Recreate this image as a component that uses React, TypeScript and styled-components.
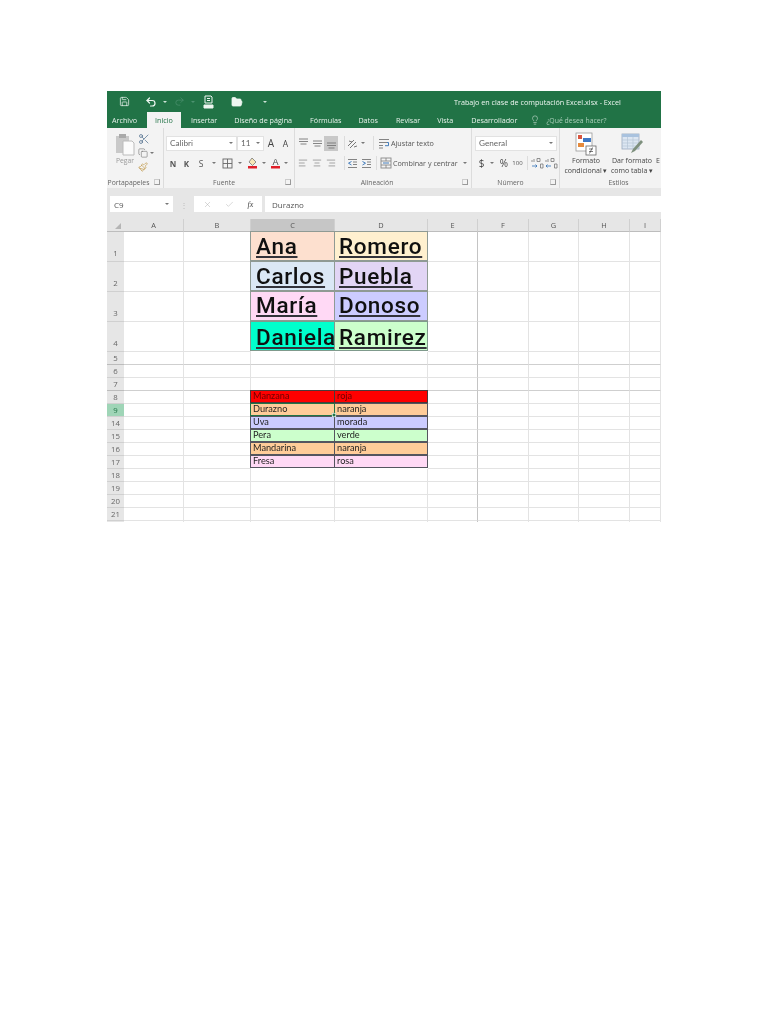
import React, { FC, ReactNode } from "react";
import styled, { createGlobalStyle } from "styled-components";
import {
  AlignCenter,
  AlignLeft,
  AlignRight,
  Check,
  Copy,
  FolderOpen,
  Lightbulb,
  Paintbrush,
  Redo2,
  Save,
  Scissors,
  Undo2,
  X
} from "lucide-react";

const GlobalStyle = createGlobalStyle`
  html, body { margin: 0; padding: 0; background: #fff; }
  body { font-family: "Open Sans", "Liberation Sans", sans-serif; }
`;

const Page = styled.div`
  width: 768px;
  height: 1024px;
  padding: 91px 0 0 107px;
  box-sizing: border-box;
  overflow: hidden;
`;

const Excel = styled.div`
  width: 554px;
  height: 431px;
  overflow: hidden;
  filter: blur(0.5px);
`;

/* title bar */

const TitleBar = styled.div`
  height: 21px;
  background: #217346;
  color: #eef6f1;
  display: flex;
  align-items: center;
  font-size: 7.2px;
`;

const QuickButton = styled.span<{ $width: number }>`
  width: ${(p) => p.$width}px;
  display: flex;
  align-items: center;
  justify-content: center;
  flex-shrink: 0;
`;

const DocTitle = styled.span`
  margin-left: 179px;
  white-space: nowrap;
`;

const TabBar = styled.div`
  height: 16px;
  background: #217346;
  display: flex;
  align-items: stretch;
  padding-left: 5px;
`;

const Tab = styled.div<{ $active?: boolean; $gap: number }>`
  margin-left: ${(p) => p.$gap}px;
  padding: ${(p) => (p.$active ? "0 8px" : "0")};
  display: flex;
  align-items: center;
  gap: 6px;
  font-size: 7.2px;
  white-space: nowrap;
  color: ${(p) => (p.$active ? "#217346" : "#e6f1ea")};
  background: ${(p) => (p.$active ? "#f3f3f3" : "transparent")};
`;

const TabHint = styled.span`
  color: #a9cdb8;
  font-size: 6.9px;
`;

/* ribbon */

const Ribbon = styled.div`
  height: 60px;
  background: #f3f3f3;
  display: flex;
`;

const Group = styled.div<{ $width: number }>`
  width: ${(p) => p.$width}px;
  flex-shrink: 0;
  box-sizing: border-box;
  border-right: 1px solid #dcdcdc;
  display: flex;
  flex-direction: column;
  &:last-child { border-right: 0; }
`;

const GroupBody = styled.div`
  flex: 1;
  min-height: 0;
  display: flex;
  flex-direction: column;
`;

const ToolRow = styled.div<{ $top: number; $left: number }>`
  display: flex;
  align-items: center;
  height: 16px;
  margin-top: ${(p) => p.$top}px;
  margin-left: ${(p) => p.$left}px;
  color: #555;
  font-size: 7.2px;
  white-space: nowrap;
`;

const GroupLabel = styled.div<{ $padLeft?: number; $padRight?: number }>`
  height: 12px;
  flex-shrink: 0;
  box-sizing: border-box;
  padding: 0 ${(p) => p.$padRight ?? 0}px 0 ${(p) => p.$padLeft ?? 0}px;
  display: flex;
  align-items: center;
  justify-content: center;
  position: relative;
  font-size: 6.8px;
  color: #666;
  white-space: nowrap;
`;

const Launcher = styled.span`
  position: absolute;
  right: 3px;
  top: 3px;
  width: 4px;
  height: 4px;
  border: 1px solid #999;
  border-top-color: #ccc;
  border-left-color: #ccc;
`;

const Tool = styled.span<{ $width: number; $on?: boolean; $weight?: number; $color?: string; $size?: number }>`
  width: ${(p) => p.$width}px;
  height: 15px;
  flex-shrink: 0;
  display: flex;
  align-items: center;
  justify-content: center;
  font-size: ${(p) => p.$size ?? 7.2}px;
  font-weight: ${(p) => p.$weight ?? 400};
  color: ${(p) => p.$color ?? "#555"};
  background: ${(p) => (p.$on ? "#c8c8c8" : "transparent")};
`;

const Caret = styled.span<{ $width?: number; $color?: string }>`
  width: ${(p) => p.$width ?? 10}px;
  flex-shrink: 0;
  display: flex;
  justify-content: center;
  &::after {
    content: "";
    border-left: 2px solid transparent;
    border-right: 2px solid transparent;
    border-top: 2px solid ${(p) => p.$color ?? "#777"};
  }
`;

const ComboBox = styled.div<{ $width: number }>`
  width: ${(p) => p.$width}px;
  height: 15px;
  box-sizing: border-box;
  padding: 0 2px 0 3px;
  background: #fff;
  border: 1px solid #e2e2e2;
  display: flex;
  align-items: center;
  justify-content: space-between;
  font-family: "Lato", "Open Sans", sans-serif;
  font-size: 8.2px;
  color: #666;
  flex-shrink: 0;
`;

const PasteArea = styled.div`
  display: flex;
  height: 48px;
  padding: 5px 0 0 5px;
  box-sizing: border-box;
`;

const PasteButton = styled.div`
  width: 26px;
  display: flex;
  flex-direction: column;
  align-items: center;
  font-size: 6.8px;
  line-height: 8px;
  color: #999;
`;

const ClipColumn = styled.div`
  display: flex;
  flex-direction: column;
  gap: 3px;
  color: #666;
`;

const ClipTool = styled.span`
  display: flex;
  align-items: center;
  height: 11px;
`;

const BigTool = styled.div<{ $width: number }>`
  width: ${(p) => p.$width}px;
  flex-shrink: 0;
  display: flex;
  flex-direction: column;
  align-items: center;
  font-size: 7px;
  line-height: 10px;
  color: #444;
  white-space: nowrap;
  text-align: center;
  padding-top: 4px;
`;

const StylesRow = styled.div`
  display: flex;
  padding-left: 2px;
  height: 48px;
  overflow: hidden;
`;

const Divider = styled.span<{ $left: number; $right: number }>`
  width: 1px;
  height: 14px;
  background: #dcdcdc;
  margin: 0 ${(p) => p.$right}px 0 ${(p) => p.$left}px;
  flex-shrink: 0;
`;

/* formula bar */

const FormulaBar = styled.div`
  height: 31px;
  box-sizing: border-box;
  padding-top: 8px;
  background: #e6e6e6;
`;

const FormulaInner = styled.div`
  height: 16px;
  display: flex;
  align-items: stretch;
  font-size: 8px;
  color: #555;
`;

const NameBox = styled.div`
  width: 63px;
  margin-left: 3px;
  background: #fff;
  display: flex;
  align-items: center;
  justify-content: space-between;
  padding: 0 3px 0 4px;
  box-sizing: border-box;
`;

const Grip = styled.span`
  width: 21px;
  display: flex;
  align-items: center;
  justify-content: center;
  color: #bbb;
  font-size: 8px;
`;

const FormulaTools = styled.div`
  width: 68px;
  background: #fff;
  display: flex;
  align-items: center;
  justify-content: space-around;
  color: #aaa;
  padding: 0 2px;
  box-sizing: border-box;
`;

const FxLabel = styled.span`
  font-family: "Liberation Serif", serif;
  font-style: italic;
  font-size: 8px;
  color: #444;
`;

const FormulaInput = styled.div`
  flex: 1;
  margin-left: 3px;
  background: #fff;
  padding-left: 7px;
  display: flex;
  align-items: center;
`;

/* sheet */

const Sheet = styled.div`
  display: grid;
  grid-template-columns: 17px 60px 67px 84px 93px 50px 51px 50px 51px 31px;
  background: #fff;
`;

const Corner = styled.div`
  height: 12px;
  background: #e6e6e6;
  border-bottom: 1px solid #bdbdbd;
  position: relative;
  &::after {
    content: "";
    position: absolute;
    right: 3px;
    bottom: 2px;
    border-left: 6px solid transparent;
    border-bottom: 6px solid #b5b5b5;
  }
`;

const ColumnHead = styled.div<{ $selected?: boolean }>`
  height: 12px;
  display: flex;
  align-items: center;
  justify-content: center;
  font-size: 7.4px;
  color: #555;
  background: ${(p) => (p.$selected ? "#c6c6c6" : "#e6e6e6")};
  border-right: 1px solid #d0d0d0;
  border-bottom: 1px solid ${(p) => (p.$selected ? "#217346" : "#bdbdbd")};
`;

const RowHead = styled.div<{ $height: number; $tall?: boolean; $selected?: boolean; $heavy?: boolean }>`
  height: ${(p) => p.$height}px;
  box-sizing: border-box;
  display: flex;
  align-items: flex-end;
  justify-content: center;
  padding-bottom: ${(p) => (p.$tall ? 2 : 0)}px;
  font-size: 7.8px;
  line-height: 12px;
  overflow: hidden;
  color: ${(p) => (p.$selected ? "#217346" : "#666")};
  background: ${(p) => (p.$selected ? "#9fd5b7" : "#e6e6e6")};
  border-bottom: 1px solid ${(p) => (p.$heavy ? "#bcbcbc" : "#d0d0d0")};
`;

const Cell = styled.div<{
  $height: number;
  $bg?: string;
  $edge?: string;
  $heavyRight?: boolean;
  $heavy?: boolean;
  $active?: boolean;
}>`
  height: ${(p) => p.$height}px;
  box-sizing: border-box;
  position: relative;
  overflow: visible;
  white-space: nowrap;
  display: flex;
  align-items: flex-end;
  background: ${(p) => p.$bg ?? "transparent"};
  border-bottom: 1px solid ${(p) => p.$edge ?? (p.$heavy ? "#cfcfcf" : "#e3e3e3")};
  border-right: 1px solid ${(p) => p.$edge ?? (p.$heavyRight ? "#c4c4c4" : "#e3e3e3")};
  ${(p) => (p.$edge ? `border-left: 1px solid ${p.$edge}; border-top: 1px solid ${p.$edge}; margin: -1px 0 0 -1px;` : "")}
  ${(p) => (p.$active ? "border: 1.5px solid #217346; z-index: 1;" : "")}
`;

const NameText = styled.span<{ $lift: number; $left: number }>`
  font-family: "Roboto", "Liberation Sans", sans-serif;
  font-weight: 500;
  font-size: 22.5px;
  line-height: 28px;
  letter-spacing: 0.7px;
  color: #101010;
  margin: 0 0 ${(p) => p.$lift}px ${(p) => p.$left}px;
  text-decoration: underline;
  text-decoration-color: #33333a;
  text-decoration-thickness: 2px;
  text-underline-offset: 2px;
`;

const SmallText = styled.span<{ $color?: string }>`
  font-family: "Lato", "Open Sans", sans-serif;
  font-size: 9.2px;
  line-height: 12px;
  color: ${(p) => p.$color ?? "#1f1f1f"};
  margin-left: 2px;
`;

const FillHandle = styled.span`
  position: absolute;
  right: -3px;
  bottom: -3px;
  width: 4px;
  height: 4px;
  background: #217346;
  border: 1px solid #fff;
  z-index: 2;
  box-sizing: content-box;
  transform: scale(0.7);
`;

const columns = ["A", "B", "C", "D", "E", "F", "G", "H", "I"];

interface SheetRow {
  label: string;
  height: number;
  heavy?: boolean;
  c?: string;
  d?: string;
  cBg?: string;
  dBg?: string;
  lift?: number;
  edge?: string;
  textColor?: string;
  selected?: boolean;
}

const rows: SheetRow[] = [
  { label: "1", height: 30, lift: 0, c: "Ana", d: "Romero", cBg: "#fde0cf", dBg: "#fff0cf", edge: "#8f9a94" },
  { label: "2", height: 30, lift: 0, c: "Carlos", d: "Puebla", cBg: "#dbe8f5", dBg: "#e2d5f5", edge: "#8f9a94" },
  { label: "3", height: 30, lift: 1, c: "María", d: "Donoso", cBg: "#ffd9f5", dBg: "#ccccff", edge: "#8f9a94" },
  { label: "4", height: 30, lift: -1, c: "Daniela", d: "Ramirez", cBg: "#00ffcc", dBg: "#ccffcc", edge: "#7f9a8c" },
  { label: "5", height: 13, heavy: true },
  { label: "6", height: 13 },
  { label: "7", height: 13, heavy: true },
  { label: "8", height: 13, c: "Manzana", d: "roja", cBg: "#ff0000", dBg: "#ff0000", edge: "#4a3a3a", textColor: "#6b0000" },
  { label: "9", height: 13, c: "Durazno", d: "naranja", cBg: "#ffcc99", dBg: "#ffcc99", edge: "#55555f", selected: true },
  { label: "14", height: 13, c: "Uva", d: "morada", cBg: "#ccccff", dBg: "#ccccff", edge: "#55555f" },
  { label: "15", height: 13, c: "Pera", d: "verde", cBg: "#ccffcc", dBg: "#ccffcc", edge: "#55555f" },
  { label: "16", height: 13, c: "Mandarina", d: "naranja", cBg: "#ffcc99", dBg: "#ffcc99", edge: "#55555f" },
  { label: "17", height: 13, c: "Fresa", d: "rosa", cBg: "#ffd9f5", dBg: "#ffd9f5", edge: "#55555f" },
  { label: "18", height: 13 },
  { label: "19", height: 13 },
  { label: "20", height: 13 },
  { label: "21", height: 13 },
  { label: "", height: 2 }
];

const PasteIcon = () => (
  <svg width="20" height="24" viewBox="0 0 20 24">
    <rect x="1" y="3" width="13" height="17" fill="#c9c9c9" />
    <rect x="4" y="1" width="7" height="4" fill="#a9a9a9" />
    <path d="M8 8h9l2 2v12H8z" fill="#fbfbfb" stroke="#bbb" />
  </svg>
);

const TextColorIcon: FC<{ letter: string; fill: string }> = ({ letter, fill }) => (
  <svg width="11" height="12" viewBox="0 0 11 12">
    <text x="5.5" y="8" fontSize="9" fontFamily="Liberation Sans" textAnchor="middle" fill="#444">
      {letter}
    </text>
    <rect x="1" y="9" width="9" height="2.5" fill={fill} />
  </svg>
);

const FillIcon = () => (
  <svg width="11" height="12" viewBox="0 0 11 12">
    <path d="M5 1l4 4-3.5 3.5L2 5z" fill="#f7e8b8" stroke="#777" strokeWidth="0.8" />
    <rect x="1" y="9" width="9" height="2.5" fill="#e0202a" />
  </svg>
);

const BordersIcon = () => (
  <svg width="11" height="11" viewBox="0 0 11 11" fill="none" stroke="#666" strokeWidth="0.9">
    <rect x="1" y="1" width="9" height="9" />
    <path d="M5.5 1v9M1 5.5h9" />
  </svg>
);

const VAlignIcon: FC<{ y: number }> = ({ y }) => (
  <svg width="11" height="11" viewBox="0 0 11 11" stroke="#777" strokeWidth="0.9">
    <path d={`M1 ${y}h9M1 ${y + 2.5}h9M2.5 ${y + 5}h6`} />
  </svg>
);

const OrientIcon = () => (
  <svg width="11" height="11" viewBox="0 0 11 11" fill="none" stroke="#777" strokeWidth="1">
    <path d="M1 8l6-6M3 10l6-6M2 3l3 1M7 9l3-1" />
  </svg>
);

const IndentIcon: FC<{ flip?: boolean }> = ({ flip }) => (
  <svg width="11" height="11" viewBox="0 0 11 11" stroke="#777" strokeWidth="0.9" fill="none">
    <path d="M1 1.5h9M6 4h4M6 6.5h4M1 9.5h9" />
    <path d={flip ? "M4.5 3.5L1.5 5.2l3 1.8" : "M1.5 3.5l3 1.7-3 1.8"} stroke="#2f6fb5" />
  </svg>
);

const WrapIcon = () => (
  <svg width="12" height="11" viewBox="0 0 12 11" fill="none" stroke="#777" strokeWidth="0.9">
    <path d="M1 1.5h10M1 4.5h8M1 7.5h4M1 10h4" />
    <path d="M9 4.5h1.5v3.2H7" stroke="#2f6fb5" />
  </svg>
);

const MergeIcon = () => (
  <svg width="12" height="12" viewBox="0 0 12 12" fill="none" stroke="#888" strokeWidth="0.9">
    <rect x="1" y="1" width="10" height="10" />
    <path d="M1 4h10M1 8h10M6 1v3M6 8v3" />
    <path d="M3 6h6" stroke="#2f6fb5" />
  </svg>
);

const IncreaseDecimal: FC<{ flip?: boolean }> = ({ flip }) => (
  <svg width="13" height="13" viewBox="0 0 13 13" fill="none" stroke="#777" strokeWidth="0.8">
    <path d="M6 1.5h3v3H6zM9.500 7h2.500v4h-2.500z" />
    <path d="M1 3v2M3 2v3" />
    <path d={flip ? "M1 9h5M2.500 7.500L1 9l1.500 1.500" : "M1 9h5M4.500 7.500L6 9l-1.500 1.500"} stroke="#2f6fb5" />
  </svg>
);

const ConditionalIcon = () => (
  <svg width="22" height="24" viewBox="0 0 22 24">
    <rect x="1" y="1" width="16" height="18" fill="#fff" stroke="#999" strokeWidth="0.8" />
    <rect x="3" y="3" width="4" height="4" fill="#d9553f" />
    <rect x="8" y="6" width="8" height="4" fill="#3f78c4" />
    <rect x="3" y="11" width="6" height="4" fill="#e58a3c" />
    <rect x="11" y="14" width="10" height="9" fill="#fff" stroke="#666" strokeWidth="0.8" />
    <path d="M14 17h4M14 19.500h4M17.500 15.500l-3 6" stroke="#444" strokeWidth="0.7" />
  </svg>
);

const TableStyleIcon = () => (
  <svg width="24" height="24" viewBox="0 0 24 24">
    <rect x="2" y="2" width="17" height="15" fill="#dce6f2" stroke="#98a9bd" strokeWidth="0.8" />
    <rect x="2" y="2" width="17" height="3" fill="#a9c2de" />
    <path d="M2 8h17M2 11h17M2 14h17M7.500 5v12M13 5v12" stroke="#b5c4d5" strokeWidth="0.7" />
    <path d="M21 8l-8 9-2 4 4-2 8-9z" fill="#7d8f7d" />
  </svg>
);

const PrintPreviewIcon = () => (
  <svg width="11" height="14" viewBox="0 0 11 14" fill="none" stroke="#eef6f1" strokeWidth="1">
    <path d="M2 1h6l1 1v6H2z" />
    <path d="M4 3.500h3M4 5.500h3" />
    <path d="M1 10h9v3H1z" fill="#eef6f1" />
  </svg>
);

const Small: FC<{ children: ReactNode }> = ({ children }) => <ClipTool>{children}</ClipTool>;

const App: FC = () => {
  return (
    <Page>
      <GlobalStyle />
      <Excel>
        <TitleBar>
          <QuickButton $width={34}>
            <Save size={11} strokeWidth={1.6} />
          </QuickButton>
          <QuickButton $width={20}>
            <Undo2 size={12} strokeWidth={2.4} />
          </QuickButton>
          <QuickButton $width={8}>
            <Caret $color="#cfe3d7" />
          </QuickButton>
          <QuickButton $width={20}>
            <Redo2 size={11} strokeWidth={1.5} color="#4d9270" />
          </QuickButton>
          <QuickButton $width={8}>
            <Caret $color="#4d9270" />
          </QuickButton>
          <QuickButton $width={22}>
            <PrintPreviewIcon />
          </QuickButton>
          <QuickButton $width={36}>
            <FolderOpen size={12} strokeWidth={1.6} fill="#eef6f1" />
          </QuickButton>
          <QuickButton $width={20}>
            <Caret $color="#cfe3d7" />
          </QuickButton>
          <DocTitle>Trabajo en clase de computación Excel.xlsx - Excel</DocTitle>
        </TitleBar>

        <TabBar>
          <Tab $gap={0}>Archivo</Tab>
          <Tab $active $gap={10}>Inicio</Tab>
          <Tab $gap={10}>Insertar</Tab>
          <Tab $gap={17}>Diseño de página</Tab>
          <Tab $gap={18}>Fórmulas</Tab>
          <Tab $gap={17}>Datos</Tab>
          <Tab $gap={18}>Revisar</Tab>
          <Tab $gap={17}>Vista</Tab>
          <Tab $gap={18}>Desarrollador</Tab>
          <Tab $gap={13}>
            <Lightbulb size={10} strokeWidth={1.2} />
            <TabHint>¿Qué desea hacer?</TabHint>
          </Tab>
        </TabBar>

        <Ribbon>
          <Group $width={57}>
            <GroupBody>
              <PasteArea>
                <PasteButton>
                  <PasteIcon />
                  Pegar
                </PasteButton>
                <ClipColumn>
                  <Small>
                    <Scissors size={12} strokeWidth={1.4} color="#4a6a8a" />
                  </Small>
                  <Small>
                    <Copy size={10} strokeWidth={1.3} />
                    <Caret $width={8} />
                  </Small>
                  <Small>
                    <Paintbrush size={10} strokeWidth={1.4} color="#b98a2e" />
                  </Small>
                </ClipColumn>
              </PasteArea>
            </GroupBody>
            <GroupLabel $padRight={13}>
              Portapapeles
              <Launcher />
            </GroupLabel>
          </Group>

          <Group $width={131}>
            <GroupBody>
              <ToolRow $top={7} $left={2}>
                <ComboBox $width={71}>
                  Calibri
                  <Caret $width={6} />
                </ComboBox>
                <ComboBox $width={27}>
                  11
                  <Caret $width={6} />
                </ComboBox>
                <Tool $width={14} $color="#444" $size={10}>A</Tool>
                <Tool $width={15} $color="#444" $size={8.5}>A</Tool>
              </ToolRow>
              <ToolRow $top={4} $left={2}>
                <Tool $width={14} $weight={700} $size={8}>N</Tool>
                <Tool $width={13} $weight={700} $size={8}>K</Tool>
                <Tool $width={16} $size={8.5}>S</Tool>
                <Caret $width={10} />
                <Tool $width={16}>
                  <BordersIcon />
                </Tool>
                <Caret $width={9} />
                <Tool $width={16}>
                  <FillIcon />
                </Tool>
                <Caret $width={8} />
                <Tool $width={14}>
                  <TextColorIcon letter="A" fill="#e0202a" />
                </Tool>
                <Caret $width={8} />
              </ToolRow>
            </GroupBody>
            <GroupLabel $padRight={10}>
              Fuente
              <Launcher />
            </GroupLabel>
          </Group>

          <Group $width={177}>
            <GroupBody>
              <ToolRow $top={7} $left={1}>
                <Tool $width={14}><VAlignIcon y={1} /></Tool>
                <Tool $width={14}><VAlignIcon y={3} /></Tool>
                <Tool $width={14} $on><VAlignIcon y={5} /></Tool>
                <Divider $left={6} $right={0} />
                <Tool $width={14}><OrientIcon /></Tool>
                <Caret $width={8} />
                <Divider $left={6} $right={3} />
                <Tool $width={14}><WrapIcon /></Tool>
                <span>Ajustar texto</span>
              </ToolRow>
              <ToolRow $top={4} $left={1}>
                <Tool $width={14}><AlignLeft size={10} strokeWidth={1.2} /></Tool>
                <Tool $width={14}><AlignCenter size={10} strokeWidth={1.2} /></Tool>
                <Tool $width={14}><AlignRight size={10} strokeWidth={1.2} /></Tool>
                <Divider $left={6} $right={0} />
                <Tool $width={14}><IndentIcon flip /></Tool>
                <Tool $width={14}><IndentIcon /></Tool>
                <Divider $left={3} $right={2} />
                <Tool $width={14}><MergeIcon /></Tool>
                <span>Combinar y centrar</span>
                <Caret $width={14} />
              </ToolRow>
            </GroupBody>
            <GroupLabel $padRight={12}>
              Alineación
              <Launcher />
            </GroupLabel>
          </Group>

          <Group $width={88}>
            <GroupBody>
              <ToolRow $top={7} $left={3}>
                <ComboBox $width={82}>
                  General
                  <Caret $width={6} />
                </ComboBox>
              </ToolRow>
              <ToolRow $top={4} $left={3}>
                <Tool $width={13} $color="#444" $size={10}>$</Tool>
                <Caret $width={8} />
                <Tool $width={16} $color="#444" $size={10}>%</Tool>
                <Tool $width={11} $size={6}>100</Tool>
                <Divider $left={4} $right={2} />
                <Tool $width={14}><IncreaseDecimal /></Tool>
                <Tool $width={14}><IncreaseDecimal flip /></Tool>
              </ToolRow>
            </GroupBody>
            <GroupLabel $padRight={10}>
              Número
              <Launcher />
            </GroupLabel>
          </Group>

          <Group $width={101}>
            <StylesRow>
              <BigTool $width={48}>
                <ConditionalIcon />
                <span>Formato</span>
                <span>condicional ▾</span>
              </BigTool>
              <BigTool $width={44}>
                <TableStyleIcon />
                <span>Dar formato</span>
                <span>como tabla ▾</span>
              </BigTool>
              <BigTool $width={8}>
                <svg width="8" height="24" />
                <span>E</span>
              </BigTool>
            </StylesRow>
            <GroupLabel $padLeft={16}>Estilos</GroupLabel>
          </Group>
        </Ribbon>

        <FormulaBar>
          <FormulaInner>
            <NameBox>
              C9
              <Caret $width={6} />
            </NameBox>
            <Grip>⋮</Grip>
            <FormulaTools>
              <X size={9} strokeWidth={1.2} />
              <Check size={9} strokeWidth={1.2} />
              <FxLabel>fx</FxLabel>
            </FormulaTools>
            <FormulaInput>Durazno</FormulaInput>
          </FormulaInner>
        </FormulaBar>

        <Sheet>
          <Corner />
          {columns.map((name) => (
            <ColumnHead key={name} $selected={name === "C"}>
              {name}
            </ColumnHead>
          ))}
          {rows.map((row) => (
            <React.Fragment key={row.label}>
              <RowHead
                $height={row.height}
                $tall={row.height > 20}
                $selected={row.selected}
                $heavy={row.heavy}
              >
                {row.label}
              </RowHead>
              {columns.map((name) => {
                const filled = name === "C" || name === "D";
                const text = name === "C" ? row.c : name === "D" ? row.d : undefined;
                const active = row.selected && name === "C";
                return (
                  <Cell
                    key={name}
                    $height={row.height}
                    $heavy={row.heavy}
                    $heavyRight={name === "E"}
                    $bg={filled ? (name === "C" ? row.cBg : row.dBg) : undefined}
                    $edge={filled ? row.edge : undefined}
                    $active={active}
                  >
                    {text &&
                      (row.lift !== undefined ? (
                        <NameText $lift={row.lift} $left={name === "C" ? 5 : 4}>
                          {text}
                        </NameText>
                      ) : (
                        <SmallText $color={row.textColor}>{text}</SmallText>
                      ))}
                    {active && <FillHandle />}
                  </Cell>
                );
              })}
            </React.Fragment>
          ))}
        </Sheet>
      </Excel>
    </Page>
  );
};

export default App;
